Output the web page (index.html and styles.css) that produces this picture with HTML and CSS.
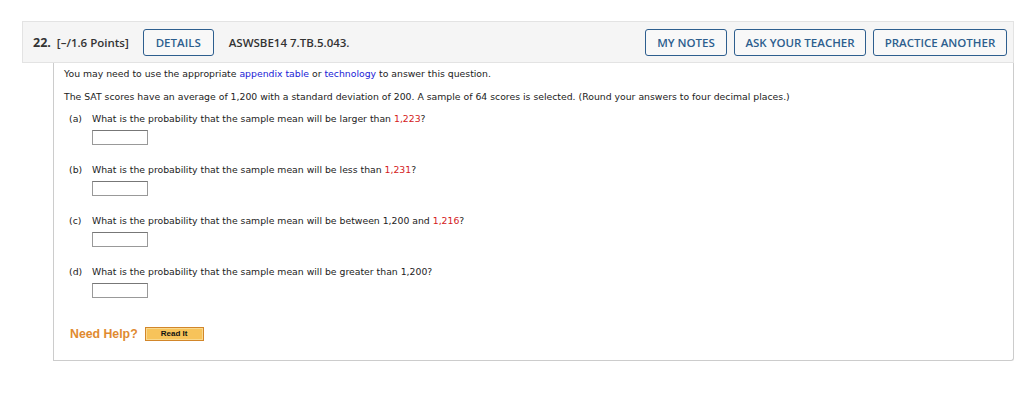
FILE: index.html
```html
<!DOCTYPE html>
<html>
<head>
<meta charset="utf-8">
<link rel="stylesheet" href="styles.css">
</head>
<body>
<div class="question">
  <div class="qhead">
    <span class="qnum">22.</span>
    <span class="points">[–/1.6 Points]</span>
    <button class="btn details">DETAILS</button>
    <span class="code">ASWSBE14 7.TB.5.043.</span>
    <div class="actions">
      <button class="btn">MY NOTES</button>
      <button class="btn">ASK YOUR TEACHER</button>
      <button class="btn">PRACTICE ANOTHER</button>
    </div>
  </div>
  <div class="qbody">
    <p class="intro">You may need to use the appropriate <a class="link">appendix table</a> or <a class="link">technology</a> to answer this question.</p>
    <p class="intro">The SAT scores have an average of 1,200 with a standard deviation of 200. A sample of 64 scores is selected. (Round your answers to four decimal places.)</p>
    <div class="part">
      <div class="prow"><span class="plabel">(a)</span><span>What is the probability that the sample mean will be larger than <span class="red">1,223</span>?</span></div>
      <div class="answer"><span class="box"></span></div>
    </div>
    <div class="part">
      <div class="prow"><span class="plabel">(b)</span><span>What is the probability that the sample mean will be less than <span class="red">1,231</span>?</span></div>
      <div class="answer"><span class="box"></span></div>
    </div>
    <div class="part">
      <div class="prow"><span class="plabel">(c)</span><span>What is the probability that the sample mean will be between 1,200 and <span class="red">1,216</span>?</span></div>
      <div class="answer"><span class="box"></span></div>
    </div>
    <div class="part">
      <div class="prow"><span class="plabel">(d)</span><span>What is the probability that the sample mean will be greater than 1,200?</span></div>
      <div class="answer"><span class="box"></span></div>
    </div>
    <div class="help">
      <span class="needhelp">Need Help?</span>
      <span class="readit">Read It</span>
    </div>
  </div>
</div>
</body>
</html>
```
FILE: styles.css
```css
html, body { margin: 0; padding: 0; background: #fff; }
body { padding: 21px 10px 0 22px; }
.question { width: 992px; }
.qhead {
  display: flex;
  align-items: center;
  height: 42px;
  background: #f5f5f5;
  border: 1px solid #e3e3e3;
  font-family: "Open Sans", sans-serif;
  font-weight: 600;
  font-size: 11.5px;
  color: #333;
  box-sizing: border-box;
  padding: 0 6px 0 10px;
}
.qnum { font-weight: 700; font-size: 12.5px; margin-right: 6px; }
.points { margin-right: 14px; }
.btn {
  font-family: "Open Sans", sans-serif;
  font-weight: 600;
  font-size: 11.5px;
  color: #2d5e8e;
  background: #f8f8f8;
  border: 1.5px solid #2d5e8e;
  border-radius: 3px;
  height: 27px;
  padding: 0 12px;
  box-sizing: border-box;
  cursor: pointer;
}
.details { width: 71px; padding: 0; margin-right: 15px; }
.code { color: #333; }
.actions { margin-left: auto; display: flex; gap: 7px; }
.actions .btn:nth-child(1) { width: 82px; padding: 0; }
.actions .btn:nth-child(2) { width: 132px; padding: 0; }
.actions .btn:nth-child(3) { width: 134px; padding: 0; }

.qbody {
  margin-left: 31px;
  width: 961px;
  height: 298px;
  box-sizing: border-box;
  border: 1px solid #ccc;
  border-top: none;
  border-radius: 0 0 3px 0;
  padding: 5px 10px 0 10px;
  font-family: "DejaVu Sans", Verdana, sans-serif;
  font-size: 9.3px;
  color: #222;
}
.intro { margin: 0; height: 23px; line-height: 12px; }
.intro + .intro { height: 22px; }
.link { color: #1a1ad6; }
.red { color: #d42020; }
.part { margin-left: 5px; }
.prow { display: flex; line-height: 12px; height: 12px; }
.plabel { width: 23px; }
.answer { padding: 5px 0 19px 23px; }
.box {
  display: block;
  width: 56px;
  height: 15px;
  box-sizing: border-box;
  border: 1px solid #999;
  border-top-color: #777;
  background: #fff;
}
.help { display: flex; align-items: center; height: 15px; margin: 9px 0 0 6px; }
.needhelp {
  font-family: "Liberation Sans", Arial, sans-serif;
  font-weight: 700;
  font-size: 12.3px;
  color: #e08a30;
  margin-right: 7px;
}
.readit {
  display: inline-flex;
  align-items: center;
  justify-content: center;
  width: 59px;
  height: 14px;
  box-sizing: border-box;
  background: #f7c35a;
  border: 1px solid #d2862a;
  box-shadow: inset 0 0 0 1px #f9d98e;
  font-family: "Liberation Sans", Arial, sans-serif;
  font-weight: 700;
  font-size: 8px;
  color: #111;
}
```
